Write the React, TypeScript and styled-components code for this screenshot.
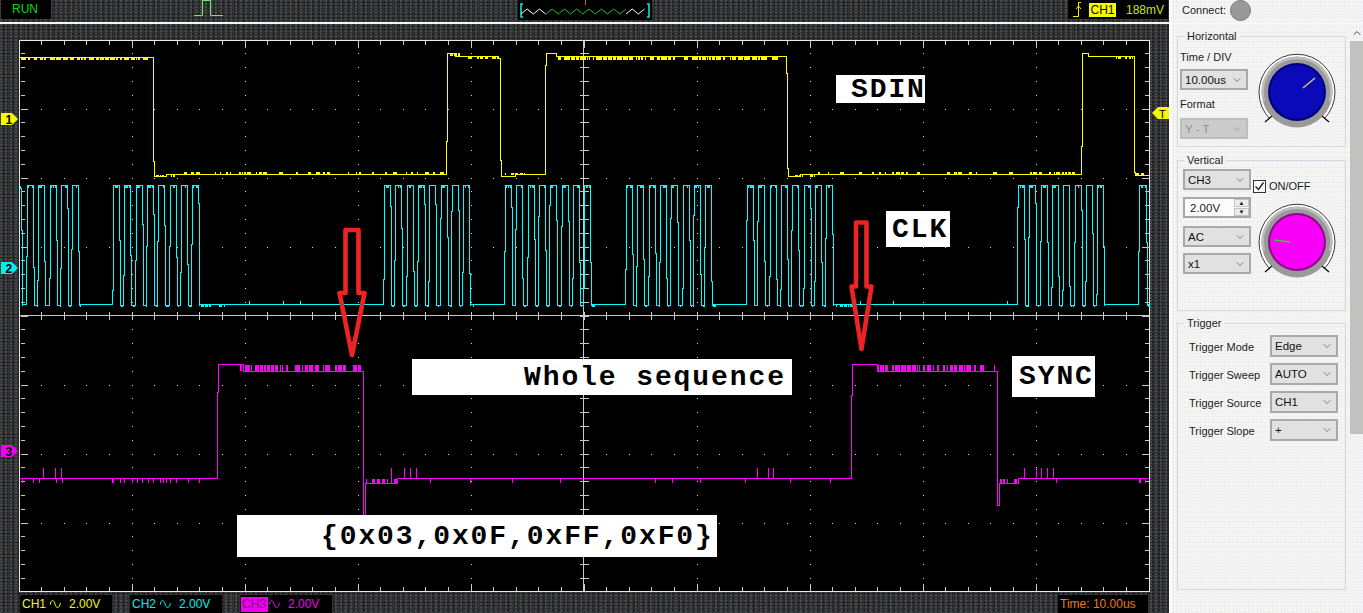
import React from 'react'
import styled, { createGlobalStyle } from 'styled-components'
import { ChevronDown, ChevronUp } from 'lucide-react'

const GlobalStyle = createGlobalStyle`
    html, body {
        margin: 0;
        padding: 0;
        background: #2f2e31;
        overflow: hidden;
    }
    * {
        box-sizing: border-box;
    }
`

const Page = styled.div`
    display: grid;
    grid-template-columns: 1169px 194px;
    width: 1363px;
    height: 613px;
    overflow: hidden;
    font-family: 'Liberation Sans', Arial, sans-serif;
`

/* ---------- scope side ---------- */

const Scope = styled.section`
    display: flex;
    flex-direction: column;
    background-color: #302f32;
    background-image: radial-gradient(circle at 1px 1px, #5a5a5e 0.6px, transparent 0.9px),
        radial-gradient(circle at 2px 1px, #2c4a33 0.6px, transparent 0.9px),
        radial-gradient(circle at 1px 2px, #1e1e20 0.7px, transparent 1px);
    background-size: 5px 3px, 7px 5px, 3px 4px;
`

const TopBar = styled.header`
    display: flex;
    height: 22px;
    flex: none;
`

const RunBox = styled.div`
    width: 50px;
    height: 19px;
    margin-left: 1px;
    padding: 1px 0 0 11px;
    background: #000;
    color: #12d612;
    font-size: 12px;
    line-height: 16px;
`

const PulseIcon = styled.svg`
    width: 30px;
    height: 17px;
    margin-left: 143px;
`

const BufferBox = styled.div`
    width: 134px;
    height: 20px;
    margin-left: 294px;
    background: #000;
`

const TriggerBox = styled.div`
    display: flex;
    align-items: center;
    width: 100px;
    height: 19px;
    margin-left: 416px;
    background: #000;
    font-size: 12px;
`

const TriggerChip = styled.span`
    width: 27px;
    height: 14px;
    margin-left: 2px;
    background: #f8f800;
    color: #111;
    line-height: 14px;
    text-align: center;
`

const TriggerValue = styled.span`
    margin-left: 10px;
    color: #c4e21e;
`

const WhiteRule = styled.div`
    flex: none;
    height: 2px;
    background: #f4f4f4;
`

const ScreenRow = styled.div`
    display: grid;
    grid-template-columns: 19px 1131px 19px;
    margin-top: 16px;
    height: 552px;
    flex: none;
`

const Gutter = styled.div`
    position: relative;
`

const Marker = styled.svg<{ $top: number; $right?: boolean }>`
    position: absolute;
    top: ${(p) => p.$top}px;
    left: ${(p) => (p.$right ? 2 : 1)}px;
    width: 17px;
    height: 12px;
`

const Plot = styled.div`
    position: relative;
    width: 1131px;
    height: 552px;
    background: #000;
`

const PlotSvg = styled.svg`
    display: block;
    width: 1131px;
    height: 552px;
`

const Note = styled.div<{ $left: number; $top: number; $w: number; $h: number; $indent: number }>`
    position: absolute;
    left: ${(p) => p.$left}px;
    top: ${(p) => p.$top}px;
    width: ${(p) => p.$w}px;
    height: ${(p) => p.$h}px;
    padding-left: ${(p) => p.$indent}px;
    display: flex;
    align-items: center;
    overflow: hidden;
    white-space: pre;
    background: #fff;
    color: #000;
    font-family: 'Liberation Mono', 'Courier New', monospace;
    font-weight: bold;
    font-size: 28px;
    letter-spacing: 1.9px;
`

const StatusBar = styled.footer`
    display: flex;
    flex: 1;
    padding: 3px 0 0 20px;
    font-size: 12px;
`

const ChannelBox = styled.div<{ $color: string }>`
    display: flex;
    align-items: center;
    width: 92px;
    margin-right: 18px;
    padding-left: 2px;
    background: #000;
    color: ${(p) => p.$color};
`

const ChannelName = styled.span<{ $active?: boolean }>`
    width: 27px;
    margin-left: ${(p) => (p.$active ? -1 : 0)}px;
    padding-left: ${(p) => (p.$active ? 1 : 0)}px;
    line-height: 15px;
    background: ${(p) => (p.$active ? '#f000f0' : 'transparent')};
    color: ${(p) => (p.$active ? '#7a007a' : 'inherit')};
`

const Wave = styled.svg`
    width: 11px;
    height: 10px;
    margin-left: 1px;
    margin-right: 8px;
`

const TimeBox = styled.div`
    width: 90px;
    margin-left: 708px;
    padding: 1px 0 0 2px;
    background: #000;
    color: #f07a0a;
    line-height: 16px;
`

/* ---------- control panel ---------- */

const Panel = styled.aside`
    display: flex;
    flex-direction: column;
    border-left: 2px solid #fdfdfd;
    background-color: #f1f1f4;
    background-image: radial-gradient(circle at 1px 1px, #fbfbf2 0.6px, transparent 0.9px),
        radial-gradient(circle at 2px 2px, #e4e4f0 0.6px, transparent 0.9px);
    background-size: 3px 3px, 4px 5px;
    color: #1c1c1c;
    font-size: 11px;
`

const ConnectRow = styled.div`
    display: flex;
    align-items: center;
    height: 24px;
    flex: none;
    padding: 0 0 3px 11px;
    border-bottom: 1px solid #fbfbfb;
`

const ConnectLamp = styled.span`
    width: 21px;
    height: 21px;
    margin-left: 4px;
    margin-top: 1px;
    border-radius: 50%;
    background: #999;
    border: 1px solid #777;
`

const PanelBody = styled.div`
    display: flex;
    flex: 1;
`

const Groups = styled.div`
    width: 169px;
    margin-left: 6px;
    padding-top: 5px;
`

const Group = styled.fieldset<{ $h: number; $gap: number }>`
    height: ${(p) => p.$h}px;
    margin: ${(p) => p.$gap}px 0 0;
    padding: 0;
    min-width: 0;
    border: 1px solid #d5d9de;
`

const GroupTitle = styled.legend`
    height: 14px;
    margin-left: 6px;
    padding: 0 3px;
    line-height: 14px;
`

const HorizontalBody = styled.div`
    display: flex;
    padding: 7px 0 0 2px;
`

const VerticalBody = styled.div`
    display: flex;
    padding: 2px 0 0 5px;
`

const ControlColumn = styled.div`
    display: flex;
    flex-direction: column;
    width: 68px;
`

const FieldLabel = styled.div<{ $mt?: number }>`
    height: 14px;
    margin-top: ${(p) => p.$mt ?? 0}px;
    line-height: 14px;
`

const KnobSvg = styled.svg<{ $ml: number; $mt: number }>`
    display: block;
    width: 80px;
    height: 80px;
    margin-left: ${(p) => p.$ml}px;
    margin-top: ${(p) => p.$mt}px;
`

const SelectWrap = styled.div<{ $mt?: number; $h?: number }>`
    position: relative;
    width: 68px;
    height: ${(p) => p.$h ?? 21}px;
    margin-top: ${(p) => p.$mt ?? 0}px;
    color: #555;
    & > svg {
        position: absolute;
        right: 5px;
        top: 5px;
        pointer-events: none;
    }
`

const NativeSelect = styled.select`
    display: block;
    width: 100%;
    height: 100%;
    padding: 0 0 0 3px;
    appearance: none;
    border: 2px solid #a9a9a9;
    border-radius: 0;
    background: #e1e1e1;
    color: #111;
    font-family: inherit;
    font-size: 11.5px;
    &:disabled {
        background: #cbcbcb;
        border-color: #bdbdbd;
        color: #8f8f8f;
        opacity: 1;
    }
`

const SpinBox = styled.div`
    display: flex;
    align-items: center;
    width: 68px;
    height: 21px;
    margin-top: 7px;
    padding-left: 5px;
    border: 2px solid #a9a9a9;
    background: #fbfbfb;
    font-size: 11.5px;
`

const SpinButtons = styled.div`
    display: flex;
    flex-direction: column;
    gap: 1px;
    margin-left: auto;
`

const SpinButton = styled.span`
    width: 15px;
    height: 8px;
    border: 1px solid #c2c2c2;
    background: #ececec;
    color: #111;
    font-size: 6px;
    line-height: 6px;
    text-align: center;
`

const OnOff = styled.label`
    display: flex;
    align-items: center;
    gap: 3px;
    height: 14px;
    margin: 10px 0 0 2px;
`

const CheckBox = styled.span`
    display: block;
    width: 13px;
    height: 13px;
    border: 1px solid #333;
    background: #f8f8f8;
`

const TriggerBody = styled.div`
    display: grid;
    grid-template-columns: 81px 68px;
    row-gap: 6px;
    align-items: center;
    padding: 5px 0 0 11px;
`

const TriggerLabel = styled.span`
    padding-top: 1px;
`

const ScrollBar = styled.div`
    display: flex;
    flex-direction: column;
    align-items: center;
    width: 13px;
    margin-left: 4px;
    padding-top: 3px;
    color: #444;
`

const ScrollThumb = styled.div`
    width: 13px;
    height: 393px;
    margin-top: 2px;
    background-color: #b4b4b4;
    background-image: radial-gradient(circle at 1px 1px, #c8c8c2 0.6px, transparent 0.9px);
    background-size: 2px 2px;
`

/* ---------- waveform data ---------- */

const seeded = (seed: number) => {
    let s = seed
    return () => {
        s = (s * 1103515245 + 12345) & 0x7fffffff
        return s / 0x7fffffff
    }
}

// runs of short vertical strokes along a trace, the scope's noise
const blips = (from: number, to: number, y: number, dy: number, density: number, seed: number, run = 3) => {
    const rnd = seeded(seed)
    let d = ''
    for (let x = from; x < to; x++) {
        if (rnd() < density) {
            const len = 1 + Math.floor(rnd() * run)
            for (let i = 0; i < len && x < to; i++, x++) d += `M${x + 0.5},${y}V${y + dy}`
        }
    }
    return d
}

const at = (xs: number[], y: number, y2: number) => xs.map((x) => `M${x + 0.5},${y}V${y2}`).join('')

const yellowPath =
    'M20,57.5H153.5V161H154.5V176H166V174.5H446.5V141H447.5V53.5H455V56.5H498V58H500.5V160H501.5V176H515V174.5H545.5V65H546.5V53.5H556V56.5' +
    'H786.5V73H787.5V168H788.5V176H800V174.5H1081V146H1082V53.5H1088V56.5H1134.5V172H1135.5V175H1149'

const yellowNoise =
    blips(20, 153, 58, 2, 0.4, 3, 5) +
    blips(156, 175, 175, 2, 0.4, 8) +
    blips(176, 446, 174, -2, 0.16, 11, 4) +
    blips(449, 462, 53, 3, 0.4, 5) +
    blips(462, 498, 57, 2, 0.35, 21, 4) +
    blips(503, 525, 175, -2, 0.3, 17) +
    blips(556, 786, 57, 2.5, 0.45, 31, 6) +
    blips(790, 815, 175, 2, 0.5, 19) +
    blips(815, 1081, 174, -2, 0.15, 23, 4) +
    blips(1112, 1133, 57, 2, 0.5, 29) +
    blips(1136, 1149, 175, -2, 0.3, 37)

const BURSTS: [number, number][] = [
    [28, 5],
    [114, 8],
    [385, 8],
    [506, 8],
    [627, 8],
    [748, 8],
    [1019, 8],
    [1140, 1],
]

const buildClock = () => {
    const rnd = seeded(77)
    let line = 'M20,186V188H21.5V230H22.5V305.5'
    let chunks = ''
    BURSTS.forEach(([start, count]) => {
        line += `V304.5H${start - 1.5}`
        for (let i = 0; i < count; i++) {
            const x = Math.round(start + i * 11.3)
            const riseStep = 205 + Math.round(rnd() * 90)
            const fallStep = 200 + Math.round(rnd() * 90)
            const end = x === 1140 ? 1146 : x + 5
            line += `H${x - 1.5}V${riseStep}H${x - 0.5}V185.5H${end + 0.5}V${fallStep}H${end + 1.5}V305.5`
            chunks += blips(x, end, 186, 2, 0.4, x)
            chunks += blips(end + 2, x + 10, 305, 2, 0.5, x + 3)
        }
    })
    line += 'V304.5H1149'
    return { line, chunks }
}

const clock = buildClock()

const cyanNoise =
    clock.chunks +
    at([249, 283, 300, 860, 893, 1007], 304, 301) +
    blips(201, 225, 305, 2, 0.3, 41) +
    blips(836, 860, 305, 2, 0.3, 43)

const magentaPath =
    'M20,478.5H217.5V392H218.5V364.5H243V371.5H363.5V515H365V483.5H397V478.5H851.5V395H852.5V364.5H877V371.5H997.5V505H999V483.5H1018V478.5H1149'

const magentaNoise =
    blips(240, 363, 365, 6, 0.4, 51, 5) +
    blips(877, 997, 365, 6, 0.45, 53, 5) +
    blips(366, 397, 483, -4, 0.3, 57) +
    blips(1000, 1018, 483, -4, 0.45, 59) +
    at([43, 55, 61, 391, 404, 410, 416, 757, 768, 773, 1024, 1036, 1041, 1047, 1053], 479, 468) +
    at(
        [22, 33, 39, 56, 62, 112, 113, 120, 124, 132, 137, 142, 148, 153, 160, 163, 166, 170, 176, 188, 199, 430, 470, 512, 560, 655, 672, 700, 745, 790, 830, 1056, 1139, 1140, 1145],
        479,
        483,
    )

const range = (from: number, to: number, step: number) => {
    const out: number[] = []
    for (let v = from; v <= to; v += step) out.push(v)
    return out
}

const CX = 583.5
const CY = 315.5
const STEP_X = 22.6
const STEP_Y = 13.8

const smallX = range(-24, 24, 1).map((k) => ({ k, x: Math.round(CX + k * STEP_X) + 0.5 }))
const smallY = range(-19, 19, 1).map((k) => ({ k, y: Math.round(CY + k * STEP_Y) + 0.5 }))

const gridTicks =
    smallX
        .map(({ k, x }) => {
            const long = k % 5 === 0
            return `M${x},41V${long ? 48 : 45}M${x},591V${long ? 584 : 587}M${x},${CY - 4}V${CY + 4}`
        })
        .join('') +
    smallY
        .map(({ k, y }) => {
            const long = k % 5 === 0
            return `M21,${y}H${long ? 28 : 25}M1149,${y}H${long ? 1142 : 1145}M${CX - 4},${y}H${CX + 5}`
        })
        .join('')

const gridDots = [
    ...range(-4, 4, 1).flatMap((m) => smallY.map(({ y }) => [Math.round(CX + m * 113), y - 0.5])),
    ...range(-3, 3, 1).flatMap((m) => smallX.map(({ x }) => [x - 0.5, Math.round(CY + m * 69)])),
]

const zigzag = (from: number, to: number) => {
    let d = `M${from},14`
    let up = true
    for (let x = from + 6.15; x <= to + 0.1; x += 6.15) {
        d += `L${x.toFixed(1)},${up ? 9 : 14}`
        up = !up
    }
    return d
}

/* ---------- small parts ---------- */

const ChannelMarker = ({ top, color, label }: { top: number; color: string; label: string }) => (
    <Marker $top={top} viewBox="0 0 17 12">
        <path d="M0,0H11L17,6L11,12H0Z" fill={color} />
        <text x="4.5" y="10.5" fontSize="12" fontWeight="bold" fontFamily="Liberation Sans" fill="#000">
            {label}
        </text>
    </Marker>
)

const AcWave = ({ color }: { color: string }) => (
    <Wave viewBox="0 0 11 10">
        <path d="M0,6C1.5,0 3.5,0 5,5S9,10 10.5,4" fill="none" stroke={color} />
    </Wave>
)

type KnobProps = {
    disc: string
    rim: string
    needle: string
    from: [number, number]
    to: [number, number]
    ml: number
    mt: number
}

const Knob = ({ disc, rim, needle, from, to, ml, mt }: KnobProps) => (
    <KnobSvg $ml={ml} $mt={mt} viewBox="0 0 80 80">
        <path d="M13,68A38,38 0 1 1 67,68" fill="#fff" stroke="#3a3a3a" strokeWidth="1" />
        <circle cx="40" cy="41" r="35.5" fill="#9a9a9a" />
        <path d="M7,50A34,34 0 0 1 40,7A34,34 0 0 1 73,50" fill="none" stroke="#bdbdbd" strokeWidth="2.5" />
        <circle cx="40" cy="41" r="29" fill={rim} />
        <circle cx="40" cy="41" r="27" fill={disc} />
        <path d={`M${from[0]},${from[1]}L${to[0]},${to[1]}`} stroke={needle} strokeWidth="1.6" />
        <path d="M8,71L15,65M72,71L65,65" stroke="#000" strokeWidth="1.2" />
    </KnobSvg>
)

const PanelSelect = ({
    value,
    mt,
    h,
    disabled,
}: {
    value: string
    mt?: number
    h?: number
    disabled?: boolean
}) => (
    <SelectWrap $mt={mt} $h={h}>
        <NativeSelect defaultValue={value} disabled={disabled}>
            <option value={value}>{value}</option>
        </NativeSelect>
        <ChevronDown size={12} strokeWidth={1.4} opacity={disabled ? 0.45 : 1} />
    </SelectWrap>
)

const triggerRows = [
    { label: 'Trigger Mode', value: 'Edge' },
    { label: 'Trigger Sweep', value: 'AUTO' },
    { label: 'Trigger Source', value: 'CH1' },
    { label: 'Trigger Slope', value: '+' },
]

const channels = [
    { name: 'CH1', color: '#f8f800' },
    { name: 'CH2', color: '#00f0f0' },
    { name: 'CH3', color: '#f000f0', active: true },
]

const App = () => {
    return (
        <Page>
            <GlobalStyle />
            <Scope>
                <TopBar>
                    <RunBox>RUN</RunBox>
                    <PulseIcon viewBox="0 0 30 17">
                        <path d="M0,15.5H8.5V0.5H16.5V15.5H29" fill="none" stroke="#6fe86f" />
                    </PulseIcon>
                    <BufferBox>
                        <svg width="134" height="20" viewBox="0 0 134 20">
                            <path d="M5,4H3V17H5M129,4H131V17H129" fill="none" stroke="#00e8e8" strokeWidth="1.6" />
                            <path d={zigzag(3, 28)} fill="none" stroke="#fff" />
                            <path d={zigzag(28, 108)} fill="none" stroke="#19c419" />
                            <path d={zigzag(108, 130)} fill="none" stroke="#fff" />
                            <path d="M67.5,0V5" stroke="#e05010" />
                        </svg>
                    </BufferBox>
                    <TriggerBox>
                        <svg width="19" height="19" viewBox="0 0 19 19">
                            <path d="M5,16.5H10.5V2.5H13M8,9L10.5,6L13,9" fill="none" stroke="#f0f000" />
                        </svg>
                        <TriggerChip>CH1</TriggerChip>
                        <TriggerValue>188mV</TriggerValue>
                    </TriggerBox>
                </TopBar>
                <WhiteRule />
                <ScreenRow>
                    <Gutter>
                        <ChannelMarker top={73} color="#f8f800" label="1" />
                        <ChannelMarker top={222} color="#00f0f0" label="2" />
                        <ChannelMarker top={405} color="#f000f0" label="3" />
                    </Gutter>
                    <Plot>
                        <PlotSvg viewBox="19 40 1131 552" shapeRendering="crispEdges">
                            <rect x="19.5" y="40.5" width="1130" height="551" fill="none" stroke="#e8e8e8" />
                            <path d={`M20,${CY}H1149M${CX},41V591`} stroke="#c9c9c9" />
                            <path d={gridTicks} stroke="#c9c9c9" />
                            {gridDots.map(([x, y], i) => (
                                <rect key={`dot-${i}`} x={x} y={y} width="1" height="1" fill="#d8d8d8" />
                            ))}
                            <path d={yellowPath + yellowNoise} fill="none" stroke="#ffff00" />
                            <path d={clock.line + cyanNoise} fill="none" stroke="#00ffff" />
                            <path d={magentaPath + magentaNoise} fill="none" stroke="#ff00ff" />
                            <g shapeRendering="auto" fill="none" stroke="#ee2424" strokeWidth="4.6" strokeLinejoin="round">
                                <path d="M345.5,230H358.5V293H364.5L352,355L339.5,293H345.5Z" />
                                <path d="M856,222.5H866.5V286.5H871.5L861.5,349L851.5,286.5H856Z" />
                            </g>
                        </PlotSvg>
                        <Note $left={817} $top={35} $w={89} $h={28} $indent={15}>
                            SDIN
                        </Note>
                        <Note $left={867} $top={171} $w={64} $h={36} $indent={6}>
                            CLK
                        </Note>
                        <Note $left={993} $top={316} $w={83} $h={41} $indent={7}>
                            SYNC
                        </Note>
                        <Note $left={393} $top={319} $w={380} $h={36} $indent={112}>
                            Whole sequence
                        </Note>
                        <Note $left={218} $top={475} $w={480} $h={42} $indent={84}>
                            {'{0x03,0x0F,0xFF,0xF0}'}
                        </Note>
                    </Plot>
                    <Gutter>
                        <Marker $top={67} $right viewBox="0 0 17 12">
                            <path d="M0,6L6,0H17V12H6Z" fill="#f8f800" />
                            <text x="7" y="10.5" fontSize="11" fontFamily="Liberation Sans" fill="#000">
                                T
                            </text>
                        </Marker>
                    </Gutter>
                </ScreenRow>
                <StatusBar>
                    {channels.map((ch) => (
                        <ChannelBox key={ch.name} $color={ch.color}>
                            <ChannelName $active={ch.active}>{ch.name}</ChannelName>
                            <AcWave color={ch.color} />
                            2.00V
                        </ChannelBox>
                    ))}
                    <TimeBox>Time: 10.00us</TimeBox>
                </StatusBar>
            </Scope>
            <Panel>
                <ConnectRow>
                    Connect:
                    <ConnectLamp />
                </ConnectRow>
                <PanelBody>
                    <Groups>
                        <Group $h={118} $gap={0}>
                            <GroupTitle>Horizontal</GroupTitle>
                            <HorizontalBody>
                                <ControlColumn>
                                    <FieldLabel>Time / DIV</FieldLabel>
                                    <PanelSelect value="10.00us" mt={5} />
                                    <FieldLabel $mt={7}>Format</FieldLabel>
                                    <PanelSelect value="Y - T" mt={7} disabled />
                                </ControlColumn>
                                <Knob
                                    disc="#0a0ab8"
                                    rim="#00007c"
                                    needle="#c9c96a"
                                    from={[46, 37]}
                                    to={[58, 27]}
                                    ml={9}
                                    mt={1}
                                />
                            </HorizontalBody>
                        </Group>
                        <Group $h={158} $gap={6}>
                            <GroupTitle>Vertical</GroupTitle>
                            <VerticalBody>
                                <ControlColumn>
                                    <PanelSelect value="CH3" />
                                    <SpinBox>
                                        2.00V
                                        <SpinButtons>
                                            <SpinButton>▲</SpinButton>
                                            <SpinButton>▼</SpinButton>
                                        </SpinButtons>
                                    </SpinBox>
                                    <PanelSelect value="AC" mt={8} />
                                    <PanelSelect value="x1" mt={6} />
                                </ControlColumn>
                                <div>
                                    <OnOff>
                                        <CheckBox>
                                            <svg width="11" height="11" viewBox="0 0 11 11">
                                                <path d="M1.5,5.5L4.5,8.5L9.5,1.5" fill="none" stroke="#222" strokeWidth="1.3" />
                                            </svg>
                                        </CheckBox>
                                        ON/OFF
                                    </OnOff>
                                    <Knob
                                        disc="#f800f8"
                                        rim="#8a0a8a"
                                        needle="#3ec83e"
                                        from={[17, 39]}
                                        to={[33, 41]}
                                        ml={6}
                                        mt={8}
                                    />
                                </div>
                            </VerticalBody>
                        </Group>
                        <Group $h={274} $gap={5}>
                            <GroupTitle>Trigger</GroupTitle>
                            <TriggerBody>
                                {triggerRows.map((row) => (
                                    <React.Fragment key={row.label}>
                                        <TriggerLabel>{row.label}</TriggerLabel>
                                        <PanelSelect value={row.value} h={22} />
                                    </React.Fragment>
                                ))}
                            </TriggerBody>
                        </Group>
                    </Groups>
                    <ScrollBar>
                        <ChevronUp size={12} strokeWidth={2} />
                        <ScrollThumb />
                    </ScrollBar>
                </PanelBody>
            </Panel>
        </Page>
    )
}

export default App
